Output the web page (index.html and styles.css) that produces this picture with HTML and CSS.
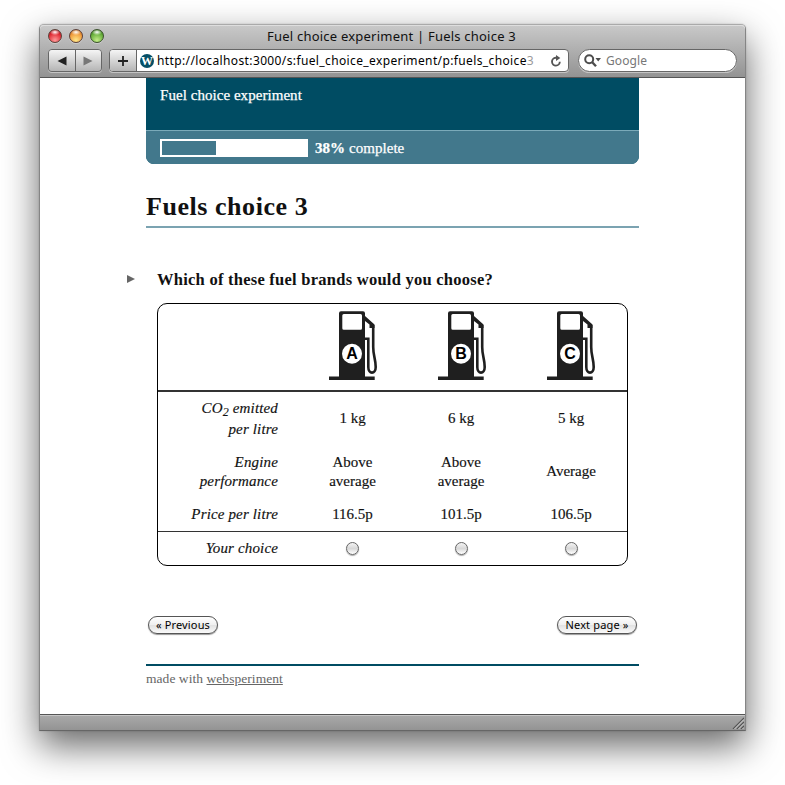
FILE: index.html
```
<!DOCTYPE html>
<html lang="en">
<head>
<meta charset="utf-8">
<title>Fuel choice experiment | Fuels choice 3</title>
<link rel="stylesheet" href="styles.css">
</head>
<body>
<svg class="defs" width="0" height="0" aria-hidden="true">
  <symbol id="pump" viewBox="0 0 48 70">
    <path fill="#1f1f1f" fill-rule="evenodd" d="M12 .3H34Q36 .3 36 2.300V65.500H45.700V69H0V65.500H10V2.300Q10 .3 12 .3ZM14.800 3Q13.300 3 13.300 4.500V17.300Q13.300 18.800 14.800 18.800H31.500Q33 18.800 33 17.300V4.500Q33 3 31.500 3Z"/>
    <path fill="#1f1f1f" d="M36 5L45.500 13.500V17H40.500V13.500L36 10Z"/>
    <path fill="none" stroke="#1f1f1f" stroke-width="2.600" d="M36 27.700H39.300V56C39.300 63.500 46.700 63.500 46.700 56C46.700 48 44.200 45 44.200 36V14"/>
    <circle cx="23" cy="42.700" r="10" fill="#fff"/>
  </symbol>
</svg>
<div class="window">
  <header class="chrome">
    <div class="titlebar">
      <span class="lights"><i class="light red"></i><i class="light amber"></i><i class="light green"></i></span>
      <span class="window-title">Fuel choice experiment | Fuels choice 3</span>
    </div>
    <div class="toolbar">
      <div class="history">
        <span class="tool"><svg width="10" height="10"><path d="M9.500 .5V9.500L.5 5Z" fill="#222"/></svg></span>
        <span class="tool"><svg width="10" height="10"><path d="M.5 .5V9.500L9.500 5Z" fill="#777"/></svg></span>
      </div>
      <div class="address">
        <span class="tool add"><svg width="12" height="12"><path d="M6 1V11M1 6H11" stroke="#222" stroke-width="1.800"/></svg></span>
        <span class="favicon">W</span>
        <span class="url">http://localhost:3000/s:fuel_choice_experiment/p:fuels_choice<span class="fade">3</span></span>
        <svg class="reload" width="12" height="12" viewBox="0 0 12 12"><path d="M7 2.800H5.700A3.900 3.900 0 1 0 9.800 6.700" fill="none" stroke="#555" stroke-width="1.900"/><path d="M6 0L10.300 2.900L6 6Z" fill="#555"/></svg>
      </div>
      <div class="search">
        <svg width="18" height="14" viewBox="0 0 18 14"><circle cx="5.200" cy="5.200" r="4" fill="none" stroke="#4d4d4d" stroke-width="2"/><path d="M8 8L12 12.300" stroke="#4d4d4d" stroke-width="2.400"/><path d="M11.500 4H17L14.200 7.500Z" fill="#4d4d4d"/></svg>
        <span>Google</span>
      </div>
    </div>
  </header>
  <main class="viewport">
    <div class="page">
      <div class="banner">
        <div class="survey"><span>Fuel choice experiment</span></div>
        <div class="progress">
          <div class="track"><div class="bar"></div></div>
          <span class="percent"><b>38%</b> complete</span>
        </div>
      </div>
      <h1><span>Fuels choice 3</span></h1>
      <div class="question"><svg width="8" height="8"><path d="M0 0V8L8 4Z" fill="#666"/></svg><h2>Which of these fuel brands would you choose?</h2></div>
      <div class="choices">
        <div class="row brands">
          <div></div>
          <div class="brand"><svg width="48" height="70"><use href="#pump"/><text x="23" y="48.200">A</text></svg></div>
          <div class="brand"><svg width="48" height="70"><use href="#pump"/><text x="23" y="48.200">B</text></svg></div>
          <div class="brand"><svg width="48" height="70"><use href="#pump"/><text x="23" y="48.200">C</text></svg></div>
        </div>
        <div class="row emissions">
          <div class="label co2"><span>CO<sub>2</sub> emitted<br>per litre</span></div>
          <div>1 kg</div><div>6 kg</div><div>5 kg</div>
        </div>
        <div class="row engine">
          <div class="label"><span>Engine<br>performance</span></div>
          <div>Above<br>average</div><div>Above<br>average</div><div>Average</div>
        </div>
        <div class="row price">
          <div class="label">Price per litre</div>
          <div>116.5p</div><div>101.5p</div><div>106.5p</div>
        </div>
        <div class="row pick">
          <div class="label">Your choice</div>
          <div><i class="radio"></i></div><div><i class="radio"></i></div><div><i class="radio"></i></div>
        </div>
      </div>
      <div class="nav"><button class="prev">« Previous</button><button class="next">Next page »</button></div>
      <footer>made with <a>websperiment</a></footer>
    </div>
  </main>
  <div class="statusbar"><svg width="12" height="12"><path d="M1 12L12 1M5 12L12 5M9 12L12 9" stroke="#555" stroke-width="1.200"/><path d="M2.500 12L12 2.500M6.500 12L12 6.500M10.500 12L12 10.500" stroke="#ccc" stroke-width="1"/></svg></div>
</div>
</body>
</html>
```
FILE: styles.css
```
* { box-sizing: border-box; }
html, body { margin: 0; height: 785px; overflow: hidden; background: #fff; }
body { padding: 24px 0 0 39px; font-family: "Liberation Serif", serif; color: #111; }
.defs { position: absolute; }
.window {
  width: 707px; height: 707px; display: flex; flex-direction: column;
  border: 1px solid #858585; border-top-color: #aaa; border-bottom-color: #666;
  border-radius: 5px 5px 0 0; background: #fff;
  box-shadow: 0 15px 36px rgba(0,0,0,.6), 0 0 2px rgba(0,0,0,.2);
}
.chrome {
  height: 53px; flex: none; border-bottom: 1px solid #555; border-radius: 4px 4px 0 0;
  background: linear-gradient(#c9c9c9, #939393);
  box-shadow: inset 0 1px #dedede;
  font-family: "Noto Sans", sans-serif;
}
.titlebar { height: 23px; display: grid; grid-template-columns: 227px auto 1fr; align-items: center; }
.lights { display: flex; gap: 7px; padding-left: 8px; margin-top: -2px; }
.light { width: 14px; height: 14px; border-radius: 50%; border: 1px solid #5c4038; box-shadow: 0 1px #ccc; }
.red { background: radial-gradient(ellipse 5px 3px at 50% 18%, #fff, transparent), radial-gradient(circle at 50% 85%, #ff9a9a, #e02b35 60%, #8d1018); }
.amber { background: radial-gradient(ellipse 5px 3px at 50% 18%, #fff, transparent), radial-gradient(circle at 50% 85%, #ffe98a, #f09a3a 60%, #a65310); }
.green { background: radial-gradient(ellipse 5px 3px at 50% 18%, #fff, transparent), radial-gradient(circle at 50% 85%, #c5ee8a, #66ae3a 60%, #2d6b12); border-color: #3b522b; }
.window-title { font-size: 13px; line-height: 20px; margin-top: -2px; white-space: nowrap; color: #111; letter-spacing: .22px; }
.toolbar { display: flex; padding: 1px 8px 0 8px; }
.history, .address, .search {
  height: 23px; display: flex; align-items: center; overflow: hidden;
  border: 1px solid #666; box-shadow: 0 1px #c4c4c4;
}
.history { width: 54px; border-radius: 4px; margin-right: 7px; }
.tool { flex: 1; height: 21px; display: flex; align-items: center; justify-content: center; background: linear-gradient(#f5f5f5, #b5b5b5); }
.tool + .tool { border-left: 1px solid #666; }
.address { width: 460px; border-radius: 4px; background: #fff; margin-right: 9px; }
.add { flex: 0 0 27px; border-right: 1px solid #666; }
.favicon {
  width: 14px; height: 14px; margin: 0 3px; flex: none; border-radius: 50%; background: #054f66; color: #fff;
  font: bold 12px/14px "Liberation Serif", serif; display: flex; justify-content: center;
}
.url { flex: 1; font-size: 12px; line-height: 19px; color: #000; white-space: nowrap; letter-spacing: .375px; }
.fade { color: #999; }
.reload { margin-right: 6px; }
.search { flex: 1; border-radius: 12px; background: #fff; padding-left: 5px; gap: 4px; font-size: 12px; color: #777; letter-spacing: .1px; }
.search svg { flex: none; }
.viewport { flex: 1; padding: 0 106px; }
.page { width: 493px; }
.banner { height: 86px; border-radius: 0 0 8px 8px; overflow: hidden; color: #fff; font-size: 15px; letter-spacing: .05px; -webkit-text-stroke: .25px; background: #004c63; }
.survey { height: 52px; padding: 9px 14px; line-height: 17px; }
.progress { height: 34px; display: flex; align-items: center; padding: 1px 14px 0; gap: 7px; background: #42788c; border-top: 1px solid #7baab9; }
.track { width: 148px; height: 18px; padding: 2px; background: #fff; }
.bar { width: 54px; height: 14px; background: #42788c; }
h1 { height: 64px; margin: 0; padding-top: 28px; border-bottom: 2px solid #7ba3b1; font-size: 26px; line-height: 29px; letter-spacing: .55px; }
.question { height: 75px; margin-left: -19px; padding-top: 42px; display: flex; align-items: flex-start; gap: 22px; }
.question svg { margin-top: 5px; }
h2 { margin: 0; font-size: 16.500px; line-height: 19px; letter-spacing: .25px; white-space: nowrap; }
.choices { width: 471px; height: 263px; margin-left: 11px; border: 1px solid #000; border-radius: 10px; font-size: 15px; -webkit-text-stroke: .15px; line-height: 19px; }
.row { display: grid; grid-template-columns: 140px 109px 108px 112px; }
.row > div { display: flex; align-items: center; justify-content: center; text-align: center; }
.row > .label { justify-content: flex-end; text-align: right; padding-right: 20px; font-style: italic; letter-spacing: .15px; }
.brands { height: 88px; border-bottom: 2px solid #333; }
.brand { padding-bottom: 2px; }
.brand:nth-child(3) { padding-left: 1px; }
.brand text { font: bold 16px "Liberation Sans", sans-serif; text-anchor: middle; -webkit-text-stroke: 0; }
.emissions, .engine { height: 53px; }
.co2 { line-height: 21px; }
sub { font-size: 12px; line-height: 0; vertical-align: -3px; }
.price { height: 34px; border-bottom: 1px solid #333; }
.pick { height: 33px; }
.radio { width: 13px; height: 13px; border: 1px solid #666; border-radius: 50%; background: linear-gradient(#f4f4f4, #d8d8d8 50%, #fff); box-shadow: 0 1px 1px #aaa; }
.nav { display: flex; justify-content: space-between; padding: 50px 2px 0; }
button {
  height: 18px; padding: 0; border: 1px solid #555; border-radius: 9px; color: #000;
  background: linear-gradient(#fff, #f0f0f0 48%, #e2e2e2 52%, #fafafa);
  box-shadow: 0 1px 1px #999; font: 11px/14px "Noto Sans", sans-serif; letter-spacing: .15px; white-space: nowrap;
}
.prev { width: 70px; }
.next { width: 80px; }
footer { margin-top: 30px; border-top: 2px solid #004c63; padding-top: 5px; font-size: 13.500px; line-height: 15px; letter-spacing: .05px; color: #666; }
footer a { text-decoration: underline; }
.statusbar {
  height: 16px; flex: none; display: flex; justify-content: flex-end; align-items: flex-end; padding: 0 1px 1px;
  border-top: 1px solid #555; background: linear-gradient(#aaa, #939393); box-shadow: inset 0 1px #c6c6c6;
}
```
